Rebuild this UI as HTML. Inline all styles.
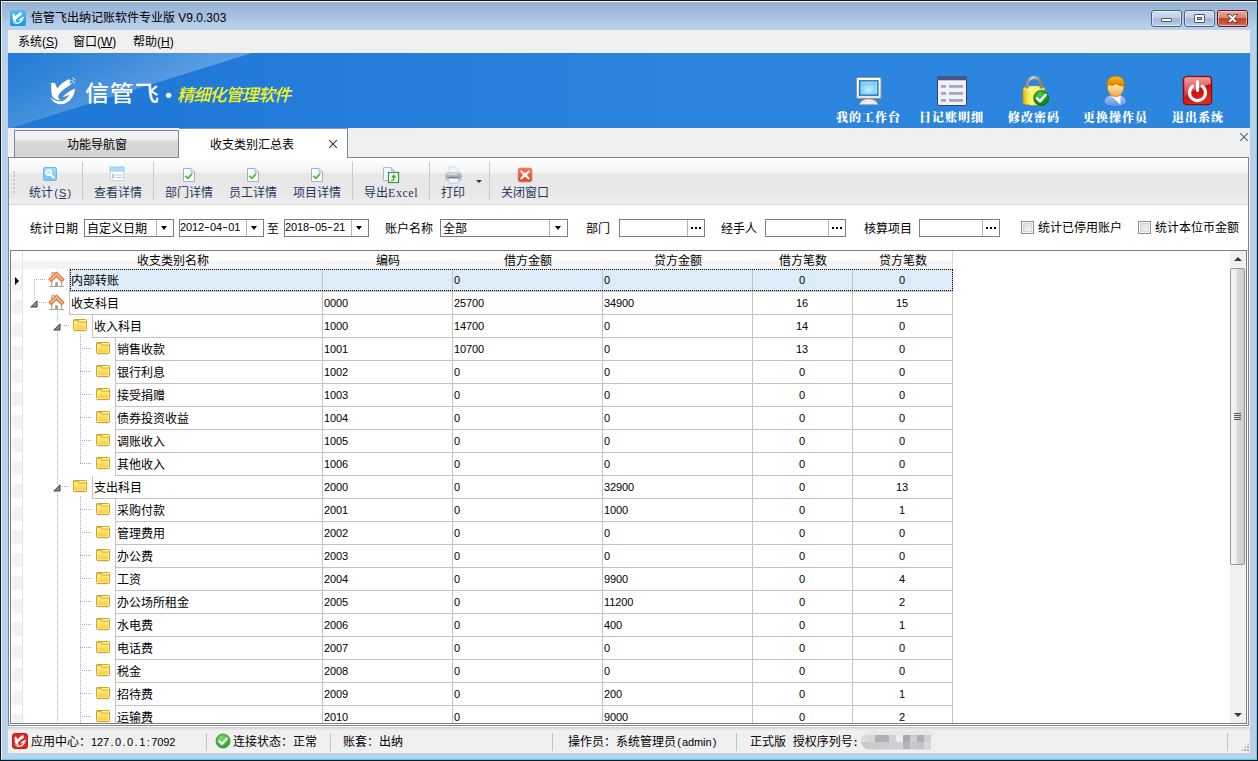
<!DOCTYPE html>
<html><head><meta charset="utf-8"><title>信管飞出纳记账软件专业版</title>
<style>
*{box-sizing:border-box}
html,body{margin:0;padding:0}
body{width:1258px;height:761px;overflow:hidden;position:relative;background:#b9d1ea;font-family:"Liberation Sans","Noto Sans CJK SC",sans-serif;font-size:12px;color:#000}
.a{position:absolute}
.t{position:absolute;white-space:nowrap;font-size:12px;line-height:12px;height:12px}
.n{position:absolute;white-space:nowrap;font-family:"Liberation Sans",sans-serif;font-size:11px;line-height:12px;height:12px;letter-spacing:-0.1px}
.m{font-family:"DejaVu Sans Mono","Liberation Mono",monospace;font-size:11px;letter-spacing:-0.62px}
.tb{color:#1e395b}
.s{font-family:"Liberation Sans",sans-serif;font-size:11px;letter-spacing:-0.1px}
.p{display:inline-block;width:6px;text-align:center;letter-spacing:0}
.h{transform:scaleX(1.6);position:relative;top:-1px}
.bl{position:absolute;white-space:nowrap;color:#fff;font-family:"Liberation Serif","Noto Serif CJK SC",serif;font-weight:900;font-size:12px;line-height:12px;height:12px;letter-spacing:1px}
.sep{position:absolute;width:1px;background:#c9c9c9}
.box{position:absolute;height:18px;top:219px;background:#fff;border:1px solid #7d7d7d}
.dv{position:absolute;top:0;bottom:0;width:1px;background:#b4b4b4}
.ar{position:absolute;width:0;height:0;border-left:3.5px solid transparent;border-right:3.5px solid transparent;border-top:4px solid #000}
.dots{position:absolute;font-weight:bold;font-size:10px;line-height:10px}
.hl{position:absolute;height:1px;background:#c3c3c3}
.vl{position:absolute;width:1px;background:#c3c3c3}
.dh{position:absolute;height:1px;background-image:linear-gradient(90deg,#b0b0b0 1px,transparent 1px);background-size:2px 1px}
.dvv{position:absolute;width:1px;background-image:linear-gradient(180deg,#b0b0b0 1px,transparent 1px);background-size:1px 2px}
.ind{position:absolute;left:1px;width:10px;height:14px;background:#f3f3f3}
</style></head>
<body>
<!-- window frame -->
<div class="a" style="left:0;top:0;width:1258px;height:761px;border:1px solid #10161e"></div>
<div class="a" style="left:1px;top:1px;width:1256px;height:759px;border:1px solid #e9f1fa;border-top-color:#fdfeff;border-right-color:#45d6f6;border-bottom-color:#45d6f6"></div>
<div class="a" style="left:2px;top:2px;width:1254px;height:28px;background:linear-gradient(180deg,#97b2d2 0%,#a3bddc 40%,#b5cde8 80%,#b9d1ea 100%)"></div>
<svg class="a" style="left:10px;top:10px" width="16" height="16" viewBox="0 0 16 16"><defs><linearGradient id="ti" x1="0" y1="0" x2="0" y2="1"><stop offset="0" stop-color="#4fc0f4"/><stop offset="1" stop-color="#169ae0"/></linearGradient></defs><rect x="0" y="0" width="16" height="16" rx="2.5" fill="url(#ti)"/><g fill="#fff" transform="translate(0.200,-1.200) scale(0.470)"><path d="M4.750 11.250C6.500 10.400 8.600 10.400 9.300 11.800L11.250 16.500C14 12.500 18.500 9 23.500 7L24.500 13C20 15.500 14.500 19.500 12.300 23.500C11.800 25 12.500 27 14.500 28C10.500 28.500 7 27 5.800 23C5 19 5.800 15 4.750 11.250Z"/><path d="M29 16.500C28.800 22 26 28 20 31C15 33.500 8 32.500 4.250 25.500C7 28 12 30 16.500 29C19.500 28.300 22 25.500 23 22.500C21 24 18.500 25 16.500 25C20 21.500 24 18.500 29 16.500Z"/></g></svg>
<div class="t" style="left:31px;top:11px;font-size:12px;line-height:14px;height:14px">信管飞出纳记账软件专业版 V9.0.303</div>
<div class="a" style="left:1151px;top:10px;width:31px;height:17px;border:1px solid #52627a;border-radius:3px;background:linear-gradient(180deg,#cfdff1 0%,#bdd1e8 45%,#a3bcd9 50%,#adc5e0 80%,#bcd2ea 100%);box-shadow:inset 0 0 0 1px rgba(255,255,255,.45)"><div class="a" style="left:9px;top:7px;width:11px;height:4px;background:#fff;border:1px solid #535666;border-radius:1px"></div></div>
<div class="a" style="left:1184px;top:10px;width:31px;height:17px;border:1px solid #52627a;border-radius:3px;background:linear-gradient(180deg,#cfdff1 0%,#bdd1e8 45%,#a3bcd9 50%,#adc5e0 80%,#bcd2ea 100%);box-shadow:inset 0 0 0 1px rgba(255,255,255,.45)"><div class="a" style="left:9px;top:3px;width:11px;height:9px;background:#fff;border:1px solid #535666;border-radius:1px"><div class="a" style="left:2px;top:2px;width:5px;height:3px;background:#9fb6d4;border:1px solid #535666"></div></div></div>
<div class="a" style="left:1217px;top:10px;width:31px;height:17px;border:1px solid #5a1a1f;border-radius:3px;background:linear-gradient(180deg,#e9a99c 0%,#d9826f 45%,#c4452a 50%,#c9553a 80%,#d97f66 100%);box-shadow:inset 0 0 0 1px rgba(255,255,255,.45)"><svg class="a" style="left:8px;top:2px" width="13" height="11" viewBox="0 0 13 11"><path d="M1 1.500h3.700l1.800 2.100 1.800-2.100h3.700l-3.700 4 3.700 4h-3.700l-1.800-2.100-1.800 2.100h-3.700l3.700-4z" fill="#fff" stroke="#4a3a44" stroke-width="0.900" stroke-linejoin="round"/></svg></div>
<!-- menu -->
<div class="a" style="left:8px;top:30px;width:1242px;height:723px;background:#f0f0f0"></div>
<div class="t" style="left:18px;top:35px;line-height:14px;height:14px">系统(<u>S</u>)</div>
<div class="t" style="left:73px;top:35px;line-height:14px;height:14px">窗口(<u>W</u>)</div>
<div class="t" style="left:133px;top:35px;line-height:14px;height:14px">帮助(<u>H</u>)</div>
<!-- banner -->
<div class="a" style="left:8px;top:53px;width:1242px;height:75px;background:linear-gradient(90deg,#1f79d6 0,#2079d6 12%,#257edb 30%,#2b84dd 55%,#2d86de 100%);overflow:hidden">
<svg class="a" style="left:0;top:0" width="1242" height="75" viewBox="0 0 1242 75"><defs><linearGradient id="sh" gradientUnits="userSpaceOnUse" x1="0" y1="0" x2="21.600" y2="69.300"><stop offset="0" stop-color="#fff" stop-opacity="0.010"/><stop offset="0.500" stop-color="#fff" stop-opacity="0.070"/><stop offset="1" stop-color="#fff" stop-opacity="0.170"/></linearGradient><linearGradient id="shx" gradientUnits="userSpaceOnUse" x1="0" y1="0" x2="244" y2="0"><stop offset="0" stop-color="#fff" stop-opacity="0"/><stop offset="1" stop-color="#fff" stop-opacity="0.140"/></linearGradient></defs><polygon points="0,0 244,0 0,76" fill="url(#sh)"/><polygon points="0,0 244,0 0,76" fill="url(#shx)"/></svg>
<svg class="a" style="left:38px;top:19px" width="36" height="38" viewBox="0 0 36 38"><g fill="#fff"><path d="M4.750 11.250C6.500 10.400 8.600 10.400 9.300 11.800L11.250 16.500C14 12.500 18.500 9 23.500 7L24.500 13C20 15.500 14.500 19.500 12.300 23.500C11.800 25 12.500 27 14.500 28C10.500 28.500 7 27 5.800 23C5 19 5.800 15 4.750 11.250Z"/><path d="M29 16.500C28.800 22 26 28 20 31C15 33.500 8 32.500 4.250 25.500C7 28 12 30 16.500 29C19.500 28.300 22 25.500 23 22.500C21 24 18.500 25 16.500 25C20 21.500 24 18.500 29 16.500Z"/><circle cx="27" cy="6.200" r="0.750"/><circle cx="28.500" cy="7.800" r="0.750"/><circle cx="26.500" cy="9.200" r="0.750"/><circle cx="28.200" cy="10.800" r="0.750"/><circle cx="24.800" cy="8.600" r="0.700"/><circle cx="25.200" cy="11.600" r="0.700"/></g></svg>
<div class="t" style="left:77px;top:29px;color:#fff;font-size:22px;line-height:24px;height:24px;font-weight:500;letter-spacing:0.6px;transform:scaleX(1.1);transform-origin:0 0">信管飞</div>
<div class="t" style="left:151px;top:32px;color:#fff;font-family:'Noto Sans CJK SC',sans-serif;font-size:19px;line-height:20px;height:20px;font-weight:900">·</div>
<div class="t" style="left:169px;top:33px;color:#f4f41a;font-size:17px;line-height:20px;height:20px;font-weight:500;font-style:italic;letter-spacing:-0.85px">精细化管理软件</div>
<svg class="a" style="left:846px;top:23px" width="30" height="30" viewBox="0 0 30 30"><defs><radialGradient id="scr" cx="0.500" cy="0.600" r="0.700"><stop offset="0" stop-color="#c8f2ff"/><stop offset="0.600" stop-color="#7fd0fa"/><stop offset="1" stop-color="#5bb9f2"/></radialGradient><linearGradient id="bz" x1="0" y1="0" x2="0" y2="1"><stop offset="0" stop-color="#ffffff"/><stop offset="1" stop-color="#e2e2e2"/></linearGradient></defs><rect x="2.500" y="1.500" width="24.500" height="21" rx="1.500" fill="url(#bz)" stroke="#9b978f" stroke-width="1"/><rect x="5.600" y="4.800" width="18.300" height="14.400" fill="url(#scr)" stroke="#1f71b8" stroke-width="1.300"/><path d="M7 6.200h15.500v11.600" fill="none" stroke="#d8f5ff" stroke-width="0.700" opacity="0.800"/><path d="M5.400 28.600c1-3.400 4.600-5.600 9.300-5.600s8.300 2.200 9.300 5.600z" fill="#ececec" stroke="#a8a49c" stroke-width="0.800"/></svg>
<svg class="a" style="left:928px;top:22px" width="32" height="32" viewBox="0 0 32 32"><rect x="1.500" y="1.500" width="29" height="29" rx="1.500" fill="#f1f1f9" stroke="#333f70" stroke-width="1"/><path d="M1 2.500q0-1.500 1.500-1.500h27q1.500 0 1.500 1.500V5.500H1z" fill="#46558a"/><path d="M2.300 6h27.400" stroke="#fff" stroke-width="0.800"/><g fill="#a6a6c4"><rect x="5" y="10" width="5" height="2.800"/><rect x="13" y="10" width="14" height="2.800"/><rect x="5" y="17" width="5" height="2.800"/><rect x="13" y="17" width="14" height="2.800"/><rect x="5" y="24" width="5" height="2.800"/><rect x="13" y="24" width="14" height="2.800"/></g></svg>
<svg class="a" style="left:1013px;top:22px" width="30" height="32" viewBox="0 0 30 32"><defs><linearGradient id="lk" x1="0" y1="0" x2="1" y2="0"><stop offset="0" stop-color="#dcae08"/><stop offset="0.180" stop-color="#f8e23a"/><stop offset="0.420" stop-color="#ffff7a"/><stop offset="0.700" stop-color="#f6dc22"/><stop offset="1" stop-color="#d9a800"/></linearGradient><linearGradient id="sk" x1="0" y1="0" x2="1" y2="0"><stop offset="0" stop-color="#8a8a8a"/><stop offset="0.350" stop-color="#d0d0d0"/><stop offset="1" stop-color="#7e7e7e"/></linearGradient><radialGradient id="gk" cx="0.420" cy="0.300" r="0.750"><stop offset="0" stop-color="#58c856"/><stop offset="0.550" stop-color="#159a1a"/><stop offset="1" stop-color="#067a0c"/></radialGradient></defs><path d="M6.200 16V9.400a7 7 0 0 1 14 0V16" fill="none" stroke="url(#sk)" stroke-width="3.200"/><path d="M2 13.500c0-1.400 5-2.500 11-2.500s11 1.100 11 2.500v14.300c0 1.400-5 2.500-11 2.500s-11-1.100-11-2.500z" fill="url(#lk)" stroke="#c49a06" stroke-width="0.700"/><ellipse cx="13" cy="13.600" rx="10.600" ry="2.300" fill="#fff59a" opacity="0.750"/><path d="M6.200 13.500v-2M20.200 13.500v-2" stroke="url(#sk)" stroke-width="3.200"/><circle cx="20.200" cy="23.100" r="7.600" fill="url(#gk)" stroke="#056a0a" stroke-width="0.600"/><path d="M15.800 23.200l3.200 3.200 5.600-6.600" fill="none" stroke="#fff" stroke-width="2.600" stroke-linecap="round" stroke-linejoin="round"/></svg>
<svg class="a" style="left:1094px;top:22px" width="26" height="32" viewBox="0 0 26 32"><defs><linearGradient id="hr" x1="0" y1="0" x2="0" y2="1"><stop offset="0" stop-color="#fbb828"/><stop offset="0.450" stop-color="#f09a0a"/><stop offset="1" stop-color="#d67c00"/></linearGradient><linearGradient id="fc" x1="0" y1="0" x2="0" y2="1"><stop offset="0" stop-color="#fff3cc"/><stop offset="0.500" stop-color="#ffdc96"/><stop offset="1" stop-color="#f6ae48"/></linearGradient><linearGradient id="bd" x1="0" y1="0" x2="0" y2="1"><stop offset="0" stop-color="#b4d2fa"/><stop offset="1" stop-color="#5a92e4"/></linearGradient></defs><path d="M2.200 27c0-4.400 4.400-7.600 11-7.600s11 3.200 11 7.600c0 2.600-4.800 4.300-11 4.300s-11-1.700-11-4.300z" fill="url(#bd)" stroke="#3c78d0" stroke-width="0.800"/><path d="M9 20.500l9.500 9.500v-10z" fill="#fff" opacity="0.950"/><ellipse cx="13.600" cy="11.800" rx="8.300" ry="9.700" fill="url(#fc)" stroke="#c47812" stroke-width="0.900"/><path d="M5.300 12.200C3.600 5 8 1 13.800 1c5.600 0 9.600 4 8.400 9.600-2.600.6-5.600-.2-8-2.200-1.800 2.400-5.400 2.200-7.400 1.200-.8.600-1.300 1.400-1.500 2.600z" fill="url(#hr)" stroke="#bf6c00" stroke-width="0.700"/></svg>
<svg class="a" style="left:1174px;top:22px" width="31" height="31" viewBox="0 0 31 31"><defs><linearGradient id="pw" x1="0" y1="0" x2="0.300" y2="1"><stop offset="0" stop-color="#d83030"/><stop offset="0.550" stop-color="#cc0a0a"/><stop offset="1" stop-color="#e02a1a"/></linearGradient><linearGradient id="pg" x1="0" y1="0" x2="0" y2="1"><stop offset="0" stop-color="#fff" stop-opacity="0.550"/><stop offset="1" stop-color="#fff" stop-opacity="0.150"/></linearGradient></defs><rect x="1.300" y="1.300" width="28.400" height="28.400" rx="3.500" fill="url(#pw)" stroke="#7c0606" stroke-width="1"/><path d="M2.300 4.500q0-2.200 2.200-2.200h22q2.200 0 2.200 2.200V9C20 11.500 9 16 2.300 22z" fill="url(#pg)"/><path d="M10.700 11.200a8 8 0 1 0 9.600 0" fill="none" stroke="#fff" stroke-width="3.200" stroke-linecap="round"/><path d="M15.500 6.800v8.600" stroke="#fff" stroke-width="3.200" stroke-linecap="round"/></svg>
<div class="bl" style="left:828px;top:59px">我的工作台</div>
<div class="bl" style="left:911px;top:59px">日记账明细</div>
<div class="bl" style="left:1000px;top:59px">修改密码</div>
<div class="bl" style="left:1075px;top:59px">更换操作员</div>
<div class="bl" style="left:1164px;top:59px">退出系统</div>
</div>
<!-- tabs -->
<div class="a" style="left:8px;top:157px;width:1241px;height:569px;background:#fff;border:1px solid #7f8697"></div>
<div class="a" style="left:14px;top:130px;width:166px;height:28px;border:1px solid #7f8697;border-bottom:none;background:linear-gradient(180deg,#f3f3f3 0,#efefef 9px,#d8d8d8 10px,#d4d4d4 100%)"></div>
<div class="a" style="left:14px;top:157px;width:165px;height:1px;background:#7f8697"></div>
<div class="t" style="left:67px;top:139px">功能导航窗</div>
<div class="a" style="left:179px;top:128px;width:169px;height:30px;background:#fff;border-right:1px solid #7f8697;border-top:1px solid #8a93a8"></div>
<div class="a" style="left:178px;top:130px;width:1px;height:27px;background:#7f8697"></div>
<div class="t" style="left:210px;top:139px">收支类别汇总表</div>
<svg class="a" style="left:328px;top:139px" width="10" height="10" viewBox="0 0 10 10"><path d="M1.200 1.200l7.600 7.600M8.800 1.200l-7.600 7.600" stroke="#333" stroke-width="1.100"/></svg>
<svg class="a" style="left:1239px;top:132px" width="10" height="10" viewBox="0 0 10 10"><path d="M1.200 1.200l7.600 7.600M8.800 1.200l-7.600 7.600" stroke="#5a6272" stroke-width="1.100"/></svg>
<!-- toolbar -->
<div class="a" style="left:9px;top:158px;width:1239px;height:47px;background:linear-gradient(180deg,#ffffff 0,#fbfbfb 6px,#f3f3f3 15px,#e8e8e8 15px,#e8e8e8 38px,#eeeeee 44px,#f1f1f1 46px,#d8d8d8 46px,#d8d8d8 47px)"></div>
<div class="a" style="left:13px;top:171px;width:2px;height:23px;background-image:linear-gradient(180deg,#c9c9c9 2px,transparent 2px);background-size:2px 4px"></div>
<div class="sep" style="left:82px;top:162px;height:38px"></div>
<div class="sep" style="left:153px;top:162px;height:38px"></div>
<div class="sep" style="left:352px;top:162px;height:38px"></div>
<div class="sep" style="left:429px;top:162px;height:38px"></div>
<div class="sep" style="left:489px;top:162px;height:38px"></div>
<div class="t tb" style="left:29px;top:187px">统计<span style="margin-left:0px"><span class="s"><span class="p">(</span><u>S</u><span class="p">)</span></span></span></div>
<div class="t tb" style="left:94px;top:187px">查看详情</div>
<div class="t tb" style="left:165px;top:187px">部门详情</div>
<div class="t tb" style="left:229px;top:187px">员工详情</div>
<div class="t tb" style="left:293px;top:187px">项目详情</div>
<div class="t tb" style="left:364px;top:187px">导出<span class="s" style="letter-spacing:0.55px;font-family:'Liberation Serif',serif;font-size:12px">Excel</span></div>
<div class="t tb" style="left:441px;top:187px">打印</div>
<div class="t tb" style="left:501px;top:187px">关闭窗口</div>
<svg class="a" style="left:42px;top:166px" width="16" height="16" viewBox="0 0 16 16"><defs><linearGradient id="s1" x1="0" y1="0" x2="0" y2="1"><stop offset="0" stop-color="#a4dcfb"/><stop offset="1" stop-color="#74bff0"/></linearGradient></defs><rect x="1.500" y="1.500" width="13" height="13" rx="1.500" fill="url(#s1)" stroke="#6db6ea" stroke-width="1"/><circle cx="6.800" cy="6.600" r="2.600" fill="#bfe6fc" stroke="#fff" stroke-width="1.500"/><path d="M8.800 8.800l3 3" stroke="#fff" stroke-width="2" stroke-linecap="round"/></svg>
<svg class="a" style="left:109px;top:166px" width="16" height="16" viewBox="0 0 16 16"><rect x="1.500" y="1.500" width="13" height="13" fill="#fff" stroke="#d0d4da" stroke-width="1"/><rect x="1" y="1" width="14" height="4" fill="#a9def9" stroke="#86c8f2" stroke-width="0.800"/><rect x="3" y="8" width="2.500" height="4.500" fill="#9fd0f4"/><path d="M7 9h6M7 11.500h6" stroke="#c4c4c4" stroke-width="1"/></svg>
<svg class="a" style="left:182px;top:167px" width="14" height="16" viewBox="0 0 14 16"><path d="M1.500 1.500h7.500l3.500 3.500v9.500h-11z" fill="#fdfdff" stroke="#a3aed2" stroke-width="1"/><path d="M9 1.500v3.500h3.500" fill="#e4ebfa" stroke="#a3aed2" stroke-width="0.900"/><path d="M3.8 9.3l2 2 3.9-4.2" fill="none" stroke="#55bb3e" stroke-width="1.9" stroke-linecap="round" stroke-linejoin="round"/></svg>
<svg class="a" style="left:246px;top:167px" width="14" height="16" viewBox="0 0 14 16"><path d="M1.500 1.500h7.500l3.500 3.500v9.500h-11z" fill="#fdfdff" stroke="#a3aed2" stroke-width="1"/><path d="M9 1.500v3.500h3.500" fill="#e4ebfa" stroke="#a3aed2" stroke-width="0.900"/><path d="M3.8 9.3l2 2 3.9-4.2" fill="none" stroke="#55bb3e" stroke-width="1.9" stroke-linecap="round" stroke-linejoin="round"/></svg>
<svg class="a" style="left:310px;top:167px" width="14" height="16" viewBox="0 0 14 16"><path d="M1.500 1.500h7.500l3.500 3.500v9.500h-11z" fill="#fdfdff" stroke="#a3aed2" stroke-width="1"/><path d="M9 1.500v3.500h3.500" fill="#e4ebfa" stroke="#a3aed2" stroke-width="0.900"/><path d="M3.8 9.3l2 2 3.9-4.2" fill="none" stroke="#55bb3e" stroke-width="1.9" stroke-linecap="round" stroke-linejoin="round"/></svg>
<svg class="a" style="left:382px;top:166px" width="18" height="18" viewBox="0 0 18 18"><path d="M1.500 1.500h7.500l3 3v10h-10.500z" fill="#f4f7ff" stroke="#b0b4dc" stroke-width="1"/><path d="M9 1.500v3h3" fill="#cfe0fa" stroke="#b0b4dc" stroke-width="0.800"/><rect x="6.500" y="6.500" width="10" height="10" fill="#fff" stroke="#3c9a3a" stroke-width="1.300"/><path d="M11.500 8.200l3 3.300h-2v1.500c0 1-1 2-2.500 2h-1v-1.200h1c.6 0 1-.4 1-1v-1.300h-2z" fill="#3fa53a"/></svg>
<svg class="a" style="left:445px;top:166px" width="17" height="18" viewBox="0 0 17 18"><defs><linearGradient id="pr" x1="0" y1="0" x2="0" y2="1"><stop offset="0" stop-color="#e6e6e6"/><stop offset="0.550" stop-color="#a9a9a9"/><stop offset="1" stop-color="#d4d4d4"/></linearGradient></defs><path d="M4 1h6.500l2.500 2.500v4h-9z" fill="#eef6ff" stroke="#bcd8f5" stroke-width="0.800"/><rect x="0.600" y="6.500" width="15.800" height="8" rx="2.500" fill="url(#pr)" stroke="#b8b8b8" stroke-width="0.700"/><rect x="3.500" y="11" width="10" height="1.600" fill="#777"/><rect x="3.800" y="12.600" width="9.400" height="4.400" fill="#f2f8ff" stroke="#a8cef2" stroke-width="0.800"/><circle cx="13.800" cy="8.600" r="0.600" fill="#444"/></svg>
<div class="ar" style="left:476px;top:180px;border-left-width:3px;border-right-width:3px;border-top:3px solid #1e395b"></div>
<svg class="a" style="left:517px;top:167px" width="16" height="16" viewBox="0 0 16 16"><defs><linearGradient id="cx" x1="0" y1="0" x2="0" y2="1"><stop offset="0" stop-color="#f3775c"/><stop offset="1" stop-color="#dd4528"/></linearGradient></defs><rect x="1.200" y="1.200" width="13.600" height="13.600" rx="2" fill="url(#cx)" stroke="#e2664c" stroke-width="0.800"/><path d="M4.200 3.200l3.800 3 3.800-3 1.200 1.200-3 3.600 3 3.600-1.200 1.200-3.800-3-3.800 3-1.200-1.200 3-3.600-3-3.600z" fill="#f6f8fb"/></svg>
<!-- filter -->
<div class="t" style="left:30px;top:223px">统计日期</div>
<div class="t" style="left:267px;top:223px">至</div>
<div class="t" style="left:385px;top:223px">账户名称</div>
<div class="t" style="left:586px;top:223px">部门</div>
<div class="t" style="left:721px;top:223px">经手人</div>
<div class="t" style="left:864px;top:223px">核算项目</div>
<div class="box" style="left:84px;width:90px"><div class="t" style="left:2px;top:3px">自定义日期</div><div class="dv" style="left:71px"></div><div class="ar" style="left:76px;top:6px"></div></div>
<div class="box" style="left:179px;width:85px"><div class="t" style="left:0px;top:1px"><span class="s">2012<span class="p h">-</span>04<span class="p h">-</span>01</span></div><div class="dv" style="left:66px"></div><div class="ar" style="left:71px;top:6px"></div></div>
<div class="box" style="left:284px;width:85px"><div class="t" style="left:0px;top:1px"><span class="s">2018<span class="p h">-</span>05<span class="p h">-</span>21</span></div><div class="dv" style="left:66px"></div><div class="ar" style="left:71px;top:6px"></div></div>
<div class="box" style="left:440px;width:128px"><div class="t" style="left:2px;top:3px">全部</div><div class="dv" style="left:108px"></div><div class="ar" style="left:114px;top:6px"></div></div>
<div class="box" style="left:619px;width:86px"><div class="dv" style="left:67px"></div><div class="a" style="left:71px;top:7px;width:2px;height:2px;background:#000;box-shadow:4px 0 0 #000,8px 0 0 #000"></div></div>
<div class="box" style="left:765px;width:81px"><div class="dv" style="left:62px"></div><div class="a" style="left:66px;top:7px;width:2px;height:2px;background:#000;box-shadow:4px 0 0 #000,8px 0 0 #000"></div></div>
<div class="box" style="left:919px;width:81px"><div class="dv" style="left:62px"></div><div class="a" style="left:66px;top:7px;width:2px;height:2px;background:#000;box-shadow:4px 0 0 #000,8px 0 0 #000"></div></div>
<div class="a" style="left:1021px;top:221px;width:13px;height:13px;border:1px solid #8e8f8f;background:#f4f4f4"><div class="a" style="left:1px;top:1px;width:9px;height:9px;border:1px solid #d6d6d6;background:linear-gradient(135deg,#dcdcdc,#f6f6f6)"></div></div>
<div class="t" style="left:1038px;top:222px">统计已停用账户</div>
<div class="a" style="left:1138px;top:221px;width:13px;height:13px;border:1px solid #8e8f8f;background:#f4f4f4"><div class="a" style="left:1px;top:1px;width:9px;height:9px;border:1px solid #d6d6d6;background:linear-gradient(135deg,#dcdcdc,#f6f6f6)"></div></div>
<div class="t" style="left:1155px;top:222px">统计本位币金额</div>
<!-- grid -->
<div class="a" style="left:10px;top:250px;width:1237px;height:474px;border:1px solid #7d7d7d;background:#fff;overflow:hidden">
<div class="a" style="left:0;top:0;width:942px;height:18px;background:linear-gradient(180deg,#fff 0,#fff 9px,#f5f5f6 10px,#f3f3f4 100%)"></div>
<div class="a" style="left:11px;top:10px;width:1px;height:8px;background:#fdfdfd"></div>
<div class="a" style="left:311px;top:10px;width:1px;height:8px;background:#fdfdfd"></div>
<div class="a" style="left:441px;top:10px;width:1px;height:8px;background:#fdfdfd"></div>
<div class="a" style="left:591px;top:10px;width:1px;height:8px;background:#fdfdfd"></div>
<div class="a" style="left:741px;top:10px;width:1px;height:8px;background:#fdfdfd"></div>
<div class="a" style="left:841px;top:10px;width:1px;height:8px;background:#fdfdfd"></div>
<div class="a" style="left:941px;top:10px;width:1px;height:8px;background:#fdfdfd"></div>
<div class="a" style="left:941px;top:0;width:1px;height:18px;background:#dadada"></div>
<div class="t" style="left:126px;top:4px">收支类别名称</div>
<div class="t" style="left:365px;top:4px">编码</div>
<div class="t" style="left:493px;top:4px">借方金额</div>
<div class="t" style="left:643px;top:4px">贷方金额</div>
<div class="t" style="left:768px;top:4px">借方笔数</div>
<div class="t" style="left:868px;top:4px">贷方笔数</div>
<svg width="0" height="0" style="position:absolute"><defs><linearGradient id="fg" x1="0" y1="0" x2="0" y2="1"><stop offset="0" stop-color="#fdf3a4"/><stop offset="0.500" stop-color="#fbe066"/><stop offset="1" stop-color="#f3c838"/></linearGradient></defs></svg>
<div class="ind" style="top:26px"></div>
<div class="a" style="left:59px;top:18px;width:882px;height:22px;background:#dcecf8"></div>
<div class="hl" style="left:58px;top:40px;width:884px"></div>
<div class="vl" style="left:58px;top:18px;height:23px"></div>
<svg class="a" style="left:37px;top:20px" width="17" height="17" viewBox="0 0 17 17"><path d="M3.800 6V1.600h2.600V4" fill="#fff" stroke="#8f949a" stroke-width="0.900"/><path d="M3.800 8.500v7h9.600v-7" fill="#fff" stroke="#9a9a9a" stroke-width="1"/><rect x="7.200" y="11.200" width="2.700" height="4.300" fill="#9c9c9c"/><path d="M1 15.500h15" stroke="#a8a8a8" stroke-width="1"/><path d="M8.500 1.200L16 8.300l-2.200 2.300-5.300-5.100-5.300 5.100L1 8.300z" fill="#f6b087" stroke="#e0722c" stroke-width="1.100" stroke-linejoin="round"/><path d="M8.500 2.800l5.800 5.600M8.500 2.800L2.700 8.400" stroke="#fbd3ba" stroke-width="0.900" stroke-dasharray="0.900 0.900" fill="none"/></svg>
<div class="dh" style="left:23px;top:28px;width:12px"></div>
<div class="t" style="left:60px;top:24px">内部转账</div>
<div class="n" style="left:443px;top:23px">0</div>
<div class="n" style="left:593px;top:23px">0</div>
<div class="n" style="left:741px;top:23px;width:100px;text-align:center">0</div>
<div class="n" style="left:841px;top:23px;width:100px;text-align:center">0</div>
<div class="ind" style="top:49px"></div>
<div class="hl" style="left:58px;top:63px;width:884px"></div>
<div class="vl" style="left:58px;top:41px;height:23px"></div>
<svg class="a" style="left:37px;top:43px" width="17" height="17" viewBox="0 0 17 17"><path d="M3.800 6V1.600h2.600V4" fill="#fff" stroke="#8f949a" stroke-width="0.900"/><path d="M3.800 8.500v7h9.600v-7" fill="#fff" stroke="#9a9a9a" stroke-width="1"/><rect x="7.200" y="11.200" width="2.700" height="4.300" fill="#9c9c9c"/><path d="M1 15.500h15" stroke="#a8a8a8" stroke-width="1"/><path d="M8.500 1.200L16 8.300l-2.200 2.300-5.300-5.100-5.300 5.100L1 8.300z" fill="#f6b087" stroke="#e0722c" stroke-width="1.100" stroke-linejoin="round"/><path d="M8.500 2.800l5.800 5.600M8.500 2.800L2.700 8.400" stroke="#fbd3ba" stroke-width="0.900" stroke-dasharray="0.900 0.900" fill="none"/></svg>
<svg class="a" style="left:19px;top:49px" width="8" height="8" viewBox="0 0 8 8"><path d="M7 0.800v6.200h-6.200z" fill="#8a8a8a" stroke="#3c3c3c" stroke-width="1" stroke-linejoin="round"/></svg>
<div class="dh" style="left:28px;top:51px;width:7px"></div>
<div class="t" style="left:60px;top:47px">收支科目</div>
<div class="n" style="left:313px;top:46px">0000</div>
<div class="n" style="left:443px;top:46px">25700</div>
<div class="n" style="left:593px;top:46px">34900</div>
<div class="n" style="left:741px;top:46px;width:100px;text-align:center">16</div>
<div class="n" style="left:841px;top:46px;width:100px;text-align:center">15</div>
<div class="ind" style="top:72px"></div>
<div class="hl" style="left:81px;top:86px;width:861px"></div>
<div class="vl" style="left:81px;top:64px;height:23px"></div>
<svg class="a" style="left:62px;top:68px" width="14" height="13" viewBox="0 0 14 13"><rect x="0.500" y="0.500" width="13" height="11" rx="1" fill="url(#fg)" stroke="#d6a31a" stroke-width="1"/><rect x="0.500" y="0.500" width="4.800" height="1.300" fill="#d6a31a"/><rect x="5.800" y="1.100" width="7" height="1.500" fill="#fef8a8"/><path d="M4.800 1l.9 2.100H13" fill="none" stroke="#d6a31a" stroke-width="0.900"/><path d="M1.500 2.600v7.900h11V3.800" fill="none" stroke="#fff7c0" stroke-width="0.700" opacity="0.850"/><path d="M1 12.300h12" stroke="#c9cfe0" stroke-width="0.600" opacity="0.700"/></svg>
<svg class="a" style="left:42px;top:72px" width="8" height="8" viewBox="0 0 8 8"><path d="M7 0.800v6.200h-6.200z" fill="#8a8a8a" stroke="#3c3c3c" stroke-width="1" stroke-linejoin="round"/></svg>
<div class="dh" style="left:51px;top:74px;width:7px"></div>
<div class="t" style="left:83px;top:70px">收入科目</div>
<div class="n" style="left:313px;top:69px">1000</div>
<div class="n" style="left:443px;top:69px">14700</div>
<div class="n" style="left:593px;top:69px">0</div>
<div class="n" style="left:741px;top:69px;width:100px;text-align:center">14</div>
<div class="n" style="left:841px;top:69px;width:100px;text-align:center">0</div>
<div class="ind" style="top:95px"></div>
<div class="hl" style="left:104px;top:109px;width:838px"></div>
<div class="vl" style="left:104px;top:87px;height:23px"></div>
<svg class="a" style="left:85px;top:91px" width="14" height="13" viewBox="0 0 14 13"><rect x="0.500" y="0.500" width="13" height="11" rx="1" fill="url(#fg)" stroke="#d6a31a" stroke-width="1"/><rect x="0.500" y="0.500" width="4.800" height="1.300" fill="#d6a31a"/><rect x="5.800" y="1.100" width="7" height="1.500" fill="#fef8a8"/><path d="M4.800 1l.9 2.100H13" fill="none" stroke="#d6a31a" stroke-width="0.900"/><path d="M1.500 2.600v7.900h11V3.800" fill="none" stroke="#fff7c0" stroke-width="0.700" opacity="0.850"/><path d="M1 12.300h12" stroke="#c9cfe0" stroke-width="0.600" opacity="0.700"/></svg>
<div class="dh" style="left:69px;top:97px;width:12px"></div>
<div class="t" style="left:106px;top:93px">销售收款</div>
<div class="n" style="left:313px;top:92px">1001</div>
<div class="n" style="left:443px;top:92px">10700</div>
<div class="n" style="left:593px;top:92px">0</div>
<div class="n" style="left:741px;top:92px;width:100px;text-align:center">13</div>
<div class="n" style="left:841px;top:92px;width:100px;text-align:center">0</div>
<div class="ind" style="top:118px"></div>
<div class="hl" style="left:104px;top:132px;width:838px"></div>
<div class="vl" style="left:104px;top:110px;height:23px"></div>
<svg class="a" style="left:85px;top:114px" width="14" height="13" viewBox="0 0 14 13"><rect x="0.500" y="0.500" width="13" height="11" rx="1" fill="url(#fg)" stroke="#d6a31a" stroke-width="1"/><rect x="0.500" y="0.500" width="4.800" height="1.300" fill="#d6a31a"/><rect x="5.800" y="1.100" width="7" height="1.500" fill="#fef8a8"/><path d="M4.800 1l.9 2.100H13" fill="none" stroke="#d6a31a" stroke-width="0.900"/><path d="M1.500 2.600v7.900h11V3.800" fill="none" stroke="#fff7c0" stroke-width="0.700" opacity="0.850"/><path d="M1 12.300h12" stroke="#c9cfe0" stroke-width="0.600" opacity="0.700"/></svg>
<div class="dh" style="left:69px;top:120px;width:12px"></div>
<div class="t" style="left:106px;top:116px">银行利息</div>
<div class="n" style="left:313px;top:115px">1002</div>
<div class="n" style="left:443px;top:115px">0</div>
<div class="n" style="left:593px;top:115px">0</div>
<div class="n" style="left:741px;top:115px;width:100px;text-align:center">0</div>
<div class="n" style="left:841px;top:115px;width:100px;text-align:center">0</div>
<div class="ind" style="top:141px"></div>
<div class="hl" style="left:104px;top:155px;width:838px"></div>
<div class="vl" style="left:104px;top:133px;height:23px"></div>
<svg class="a" style="left:85px;top:137px" width="14" height="13" viewBox="0 0 14 13"><rect x="0.500" y="0.500" width="13" height="11" rx="1" fill="url(#fg)" stroke="#d6a31a" stroke-width="1"/><rect x="0.500" y="0.500" width="4.800" height="1.300" fill="#d6a31a"/><rect x="5.800" y="1.100" width="7" height="1.500" fill="#fef8a8"/><path d="M4.800 1l.9 2.100H13" fill="none" stroke="#d6a31a" stroke-width="0.900"/><path d="M1.500 2.600v7.900h11V3.800" fill="none" stroke="#fff7c0" stroke-width="0.700" opacity="0.850"/><path d="M1 12.300h12" stroke="#c9cfe0" stroke-width="0.600" opacity="0.700"/></svg>
<div class="dh" style="left:69px;top:143px;width:12px"></div>
<div class="t" style="left:106px;top:139px">接受捐赠</div>
<div class="n" style="left:313px;top:138px">1003</div>
<div class="n" style="left:443px;top:138px">0</div>
<div class="n" style="left:593px;top:138px">0</div>
<div class="n" style="left:741px;top:138px;width:100px;text-align:center">0</div>
<div class="n" style="left:841px;top:138px;width:100px;text-align:center">0</div>
<div class="ind" style="top:164px"></div>
<div class="hl" style="left:104px;top:178px;width:838px"></div>
<div class="vl" style="left:104px;top:156px;height:23px"></div>
<svg class="a" style="left:85px;top:160px" width="14" height="13" viewBox="0 0 14 13"><rect x="0.500" y="0.500" width="13" height="11" rx="1" fill="url(#fg)" stroke="#d6a31a" stroke-width="1"/><rect x="0.500" y="0.500" width="4.800" height="1.300" fill="#d6a31a"/><rect x="5.800" y="1.100" width="7" height="1.500" fill="#fef8a8"/><path d="M4.800 1l.9 2.100H13" fill="none" stroke="#d6a31a" stroke-width="0.900"/><path d="M1.500 2.600v7.900h11V3.800" fill="none" stroke="#fff7c0" stroke-width="0.700" opacity="0.850"/><path d="M1 12.300h12" stroke="#c9cfe0" stroke-width="0.600" opacity="0.700"/></svg>
<div class="dh" style="left:69px;top:166px;width:12px"></div>
<div class="t" style="left:106px;top:162px">债券投资收益</div>
<div class="n" style="left:313px;top:161px">1004</div>
<div class="n" style="left:443px;top:161px">0</div>
<div class="n" style="left:593px;top:161px">0</div>
<div class="n" style="left:741px;top:161px;width:100px;text-align:center">0</div>
<div class="n" style="left:841px;top:161px;width:100px;text-align:center">0</div>
<div class="ind" style="top:187px"></div>
<div class="hl" style="left:104px;top:201px;width:838px"></div>
<div class="vl" style="left:104px;top:179px;height:23px"></div>
<svg class="a" style="left:85px;top:183px" width="14" height="13" viewBox="0 0 14 13"><rect x="0.500" y="0.500" width="13" height="11" rx="1" fill="url(#fg)" stroke="#d6a31a" stroke-width="1"/><rect x="0.500" y="0.500" width="4.800" height="1.300" fill="#d6a31a"/><rect x="5.800" y="1.100" width="7" height="1.500" fill="#fef8a8"/><path d="M4.800 1l.9 2.100H13" fill="none" stroke="#d6a31a" stroke-width="0.900"/><path d="M1.500 2.600v7.900h11V3.800" fill="none" stroke="#fff7c0" stroke-width="0.700" opacity="0.850"/><path d="M1 12.300h12" stroke="#c9cfe0" stroke-width="0.600" opacity="0.700"/></svg>
<div class="dh" style="left:69px;top:189px;width:12px"></div>
<div class="t" style="left:106px;top:185px">调账收入</div>
<div class="n" style="left:313px;top:184px">1005</div>
<div class="n" style="left:443px;top:184px">0</div>
<div class="n" style="left:593px;top:184px">0</div>
<div class="n" style="left:741px;top:184px;width:100px;text-align:center">0</div>
<div class="n" style="left:841px;top:184px;width:100px;text-align:center">0</div>
<div class="ind" style="top:210px"></div>
<div class="hl" style="left:104px;top:224px;width:838px"></div>
<div class="vl" style="left:104px;top:202px;height:23px"></div>
<svg class="a" style="left:85px;top:206px" width="14" height="13" viewBox="0 0 14 13"><rect x="0.500" y="0.500" width="13" height="11" rx="1" fill="url(#fg)" stroke="#d6a31a" stroke-width="1"/><rect x="0.500" y="0.500" width="4.800" height="1.300" fill="#d6a31a"/><rect x="5.800" y="1.100" width="7" height="1.500" fill="#fef8a8"/><path d="M4.800 1l.9 2.100H13" fill="none" stroke="#d6a31a" stroke-width="0.900"/><path d="M1.500 2.600v7.900h11V3.800" fill="none" stroke="#fff7c0" stroke-width="0.700" opacity="0.850"/><path d="M1 12.300h12" stroke="#c9cfe0" stroke-width="0.600" opacity="0.700"/></svg>
<div class="dh" style="left:69px;top:212px;width:12px"></div>
<div class="t" style="left:106px;top:208px">其他收入</div>
<div class="n" style="left:313px;top:207px">1006</div>
<div class="n" style="left:443px;top:207px">0</div>
<div class="n" style="left:593px;top:207px">0</div>
<div class="n" style="left:741px;top:207px;width:100px;text-align:center">0</div>
<div class="n" style="left:841px;top:207px;width:100px;text-align:center">0</div>
<div class="ind" style="top:233px"></div>
<div class="hl" style="left:81px;top:247px;width:861px"></div>
<div class="vl" style="left:81px;top:225px;height:23px"></div>
<svg class="a" style="left:62px;top:229px" width="14" height="13" viewBox="0 0 14 13"><rect x="0.500" y="0.500" width="13" height="11" rx="1" fill="url(#fg)" stroke="#d6a31a" stroke-width="1"/><rect x="0.500" y="0.500" width="4.800" height="1.300" fill="#d6a31a"/><rect x="5.800" y="1.100" width="7" height="1.500" fill="#fef8a8"/><path d="M4.800 1l.9 2.100H13" fill="none" stroke="#d6a31a" stroke-width="0.900"/><path d="M1.500 2.600v7.900h11V3.800" fill="none" stroke="#fff7c0" stroke-width="0.700" opacity="0.850"/><path d="M1 12.300h12" stroke="#c9cfe0" stroke-width="0.600" opacity="0.700"/></svg>
<svg class="a" style="left:42px;top:233px" width="8" height="8" viewBox="0 0 8 8"><path d="M7 0.800v6.200h-6.200z" fill="#8a8a8a" stroke="#3c3c3c" stroke-width="1" stroke-linejoin="round"/></svg>
<div class="dh" style="left:51px;top:235px;width:7px"></div>
<div class="t" style="left:83px;top:231px">支出科目</div>
<div class="n" style="left:313px;top:230px">2000</div>
<div class="n" style="left:443px;top:230px">0</div>
<div class="n" style="left:593px;top:230px">32900</div>
<div class="n" style="left:741px;top:230px;width:100px;text-align:center">0</div>
<div class="n" style="left:841px;top:230px;width:100px;text-align:center">13</div>
<div class="ind" style="top:256px"></div>
<div class="hl" style="left:104px;top:270px;width:838px"></div>
<div class="vl" style="left:104px;top:248px;height:23px"></div>
<svg class="a" style="left:85px;top:252px" width="14" height="13" viewBox="0 0 14 13"><rect x="0.500" y="0.500" width="13" height="11" rx="1" fill="url(#fg)" stroke="#d6a31a" stroke-width="1"/><rect x="0.500" y="0.500" width="4.800" height="1.300" fill="#d6a31a"/><rect x="5.800" y="1.100" width="7" height="1.500" fill="#fef8a8"/><path d="M4.800 1l.9 2.100H13" fill="none" stroke="#d6a31a" stroke-width="0.900"/><path d="M1.500 2.600v7.900h11V3.800" fill="none" stroke="#fff7c0" stroke-width="0.700" opacity="0.850"/><path d="M1 12.300h12" stroke="#c9cfe0" stroke-width="0.600" opacity="0.700"/></svg>
<div class="dh" style="left:69px;top:258px;width:12px"></div>
<div class="t" style="left:106px;top:254px">采购付款</div>
<div class="n" style="left:313px;top:253px">2001</div>
<div class="n" style="left:443px;top:253px">0</div>
<div class="n" style="left:593px;top:253px">1000</div>
<div class="n" style="left:741px;top:253px;width:100px;text-align:center">0</div>
<div class="n" style="left:841px;top:253px;width:100px;text-align:center">1</div>
<div class="ind" style="top:279px"></div>
<div class="hl" style="left:104px;top:293px;width:838px"></div>
<div class="vl" style="left:104px;top:271px;height:23px"></div>
<svg class="a" style="left:85px;top:275px" width="14" height="13" viewBox="0 0 14 13"><rect x="0.500" y="0.500" width="13" height="11" rx="1" fill="url(#fg)" stroke="#d6a31a" stroke-width="1"/><rect x="0.500" y="0.500" width="4.800" height="1.300" fill="#d6a31a"/><rect x="5.800" y="1.100" width="7" height="1.500" fill="#fef8a8"/><path d="M4.800 1l.9 2.100H13" fill="none" stroke="#d6a31a" stroke-width="0.900"/><path d="M1.500 2.600v7.900h11V3.800" fill="none" stroke="#fff7c0" stroke-width="0.700" opacity="0.850"/><path d="M1 12.300h12" stroke="#c9cfe0" stroke-width="0.600" opacity="0.700"/></svg>
<div class="dh" style="left:69px;top:281px;width:12px"></div>
<div class="t" style="left:106px;top:277px">管理费用</div>
<div class="n" style="left:313px;top:276px">2002</div>
<div class="n" style="left:443px;top:276px">0</div>
<div class="n" style="left:593px;top:276px">0</div>
<div class="n" style="left:741px;top:276px;width:100px;text-align:center">0</div>
<div class="n" style="left:841px;top:276px;width:100px;text-align:center">0</div>
<div class="ind" style="top:302px"></div>
<div class="hl" style="left:104px;top:316px;width:838px"></div>
<div class="vl" style="left:104px;top:294px;height:23px"></div>
<svg class="a" style="left:85px;top:298px" width="14" height="13" viewBox="0 0 14 13"><rect x="0.500" y="0.500" width="13" height="11" rx="1" fill="url(#fg)" stroke="#d6a31a" stroke-width="1"/><rect x="0.500" y="0.500" width="4.800" height="1.300" fill="#d6a31a"/><rect x="5.800" y="1.100" width="7" height="1.500" fill="#fef8a8"/><path d="M4.800 1l.9 2.100H13" fill="none" stroke="#d6a31a" stroke-width="0.900"/><path d="M1.500 2.600v7.900h11V3.800" fill="none" stroke="#fff7c0" stroke-width="0.700" opacity="0.850"/><path d="M1 12.300h12" stroke="#c9cfe0" stroke-width="0.600" opacity="0.700"/></svg>
<div class="dh" style="left:69px;top:304px;width:12px"></div>
<div class="t" style="left:106px;top:300px">办公费</div>
<div class="n" style="left:313px;top:299px">2003</div>
<div class="n" style="left:443px;top:299px">0</div>
<div class="n" style="left:593px;top:299px">0</div>
<div class="n" style="left:741px;top:299px;width:100px;text-align:center">0</div>
<div class="n" style="left:841px;top:299px;width:100px;text-align:center">0</div>
<div class="ind" style="top:325px"></div>
<div class="hl" style="left:104px;top:339px;width:838px"></div>
<div class="vl" style="left:104px;top:317px;height:23px"></div>
<svg class="a" style="left:85px;top:321px" width="14" height="13" viewBox="0 0 14 13"><rect x="0.500" y="0.500" width="13" height="11" rx="1" fill="url(#fg)" stroke="#d6a31a" stroke-width="1"/><rect x="0.500" y="0.500" width="4.800" height="1.300" fill="#d6a31a"/><rect x="5.800" y="1.100" width="7" height="1.500" fill="#fef8a8"/><path d="M4.800 1l.9 2.100H13" fill="none" stroke="#d6a31a" stroke-width="0.900"/><path d="M1.500 2.600v7.900h11V3.800" fill="none" stroke="#fff7c0" stroke-width="0.700" opacity="0.850"/><path d="M1 12.300h12" stroke="#c9cfe0" stroke-width="0.600" opacity="0.700"/></svg>
<div class="dh" style="left:69px;top:327px;width:12px"></div>
<div class="t" style="left:106px;top:323px">工资</div>
<div class="n" style="left:313px;top:322px">2004</div>
<div class="n" style="left:443px;top:322px">0</div>
<div class="n" style="left:593px;top:322px">9900</div>
<div class="n" style="left:741px;top:322px;width:100px;text-align:center">0</div>
<div class="n" style="left:841px;top:322px;width:100px;text-align:center">4</div>
<div class="ind" style="top:348px"></div>
<div class="hl" style="left:104px;top:362px;width:838px"></div>
<div class="vl" style="left:104px;top:340px;height:23px"></div>
<svg class="a" style="left:85px;top:344px" width="14" height="13" viewBox="0 0 14 13"><rect x="0.500" y="0.500" width="13" height="11" rx="1" fill="url(#fg)" stroke="#d6a31a" stroke-width="1"/><rect x="0.500" y="0.500" width="4.800" height="1.300" fill="#d6a31a"/><rect x="5.800" y="1.100" width="7" height="1.500" fill="#fef8a8"/><path d="M4.800 1l.9 2.100H13" fill="none" stroke="#d6a31a" stroke-width="0.900"/><path d="M1.500 2.600v7.900h11V3.800" fill="none" stroke="#fff7c0" stroke-width="0.700" opacity="0.850"/><path d="M1 12.300h12" stroke="#c9cfe0" stroke-width="0.600" opacity="0.700"/></svg>
<div class="dh" style="left:69px;top:350px;width:12px"></div>
<div class="t" style="left:106px;top:346px">办公场所租金</div>
<div class="n" style="left:313px;top:345px">2005</div>
<div class="n" style="left:443px;top:345px">0</div>
<div class="n" style="left:593px;top:345px">11200</div>
<div class="n" style="left:741px;top:345px;width:100px;text-align:center">0</div>
<div class="n" style="left:841px;top:345px;width:100px;text-align:center">2</div>
<div class="ind" style="top:371px"></div>
<div class="hl" style="left:104px;top:385px;width:838px"></div>
<div class="vl" style="left:104px;top:363px;height:23px"></div>
<svg class="a" style="left:85px;top:367px" width="14" height="13" viewBox="0 0 14 13"><rect x="0.500" y="0.500" width="13" height="11" rx="1" fill="url(#fg)" stroke="#d6a31a" stroke-width="1"/><rect x="0.500" y="0.500" width="4.800" height="1.300" fill="#d6a31a"/><rect x="5.800" y="1.100" width="7" height="1.500" fill="#fef8a8"/><path d="M4.800 1l.9 2.100H13" fill="none" stroke="#d6a31a" stroke-width="0.900"/><path d="M1.500 2.600v7.900h11V3.800" fill="none" stroke="#fff7c0" stroke-width="0.700" opacity="0.850"/><path d="M1 12.300h12" stroke="#c9cfe0" stroke-width="0.600" opacity="0.700"/></svg>
<div class="dh" style="left:69px;top:373px;width:12px"></div>
<div class="t" style="left:106px;top:369px">水电费</div>
<div class="n" style="left:313px;top:368px">2006</div>
<div class="n" style="left:443px;top:368px">0</div>
<div class="n" style="left:593px;top:368px">400</div>
<div class="n" style="left:741px;top:368px;width:100px;text-align:center">0</div>
<div class="n" style="left:841px;top:368px;width:100px;text-align:center">1</div>
<div class="ind" style="top:394px"></div>
<div class="hl" style="left:104px;top:408px;width:838px"></div>
<div class="vl" style="left:104px;top:386px;height:23px"></div>
<svg class="a" style="left:85px;top:390px" width="14" height="13" viewBox="0 0 14 13"><rect x="0.500" y="0.500" width="13" height="11" rx="1" fill="url(#fg)" stroke="#d6a31a" stroke-width="1"/><rect x="0.500" y="0.500" width="4.800" height="1.300" fill="#d6a31a"/><rect x="5.800" y="1.100" width="7" height="1.500" fill="#fef8a8"/><path d="M4.800 1l.9 2.100H13" fill="none" stroke="#d6a31a" stroke-width="0.900"/><path d="M1.500 2.600v7.900h11V3.800" fill="none" stroke="#fff7c0" stroke-width="0.700" opacity="0.850"/><path d="M1 12.300h12" stroke="#c9cfe0" stroke-width="0.600" opacity="0.700"/></svg>
<div class="dh" style="left:69px;top:396px;width:12px"></div>
<div class="t" style="left:106px;top:392px">电话费</div>
<div class="n" style="left:313px;top:391px">2007</div>
<div class="n" style="left:443px;top:391px">0</div>
<div class="n" style="left:593px;top:391px">0</div>
<div class="n" style="left:741px;top:391px;width:100px;text-align:center">0</div>
<div class="n" style="left:841px;top:391px;width:100px;text-align:center">0</div>
<div class="ind" style="top:417px"></div>
<div class="hl" style="left:104px;top:431px;width:838px"></div>
<div class="vl" style="left:104px;top:409px;height:23px"></div>
<svg class="a" style="left:85px;top:413px" width="14" height="13" viewBox="0 0 14 13"><rect x="0.500" y="0.500" width="13" height="11" rx="1" fill="url(#fg)" stroke="#d6a31a" stroke-width="1"/><rect x="0.500" y="0.500" width="4.800" height="1.300" fill="#d6a31a"/><rect x="5.800" y="1.100" width="7" height="1.500" fill="#fef8a8"/><path d="M4.800 1l.9 2.100H13" fill="none" stroke="#d6a31a" stroke-width="0.900"/><path d="M1.500 2.600v7.900h11V3.800" fill="none" stroke="#fff7c0" stroke-width="0.700" opacity="0.850"/><path d="M1 12.300h12" stroke="#c9cfe0" stroke-width="0.600" opacity="0.700"/></svg>
<div class="dh" style="left:69px;top:419px;width:12px"></div>
<div class="t" style="left:106px;top:415px">税金</div>
<div class="n" style="left:313px;top:414px">2008</div>
<div class="n" style="left:443px;top:414px">0</div>
<div class="n" style="left:593px;top:414px">0</div>
<div class="n" style="left:741px;top:414px;width:100px;text-align:center">0</div>
<div class="n" style="left:841px;top:414px;width:100px;text-align:center">0</div>
<div class="ind" style="top:440px"></div>
<div class="hl" style="left:104px;top:454px;width:838px"></div>
<div class="vl" style="left:104px;top:432px;height:23px"></div>
<svg class="a" style="left:85px;top:436px" width="14" height="13" viewBox="0 0 14 13"><rect x="0.500" y="0.500" width="13" height="11" rx="1" fill="url(#fg)" stroke="#d6a31a" stroke-width="1"/><rect x="0.500" y="0.500" width="4.800" height="1.300" fill="#d6a31a"/><rect x="5.800" y="1.100" width="7" height="1.500" fill="#fef8a8"/><path d="M4.800 1l.9 2.100H13" fill="none" stroke="#d6a31a" stroke-width="0.900"/><path d="M1.500 2.600v7.900h11V3.800" fill="none" stroke="#fff7c0" stroke-width="0.700" opacity="0.850"/><path d="M1 12.300h12" stroke="#c9cfe0" stroke-width="0.600" opacity="0.700"/></svg>
<div class="dh" style="left:69px;top:442px;width:12px"></div>
<div class="t" style="left:106px;top:438px">招待费</div>
<div class="n" style="left:313px;top:437px">2009</div>
<div class="n" style="left:443px;top:437px">0</div>
<div class="n" style="left:593px;top:437px">200</div>
<div class="n" style="left:741px;top:437px;width:100px;text-align:center">0</div>
<div class="n" style="left:841px;top:437px;width:100px;text-align:center">1</div>
<div class="ind" style="top:463px"></div>
<div class="hl" style="left:104px;top:477px;width:838px"></div>
<div class="vl" style="left:104px;top:455px;height:23px"></div>
<svg class="a" style="left:85px;top:459px" width="14" height="13" viewBox="0 0 14 13"><rect x="0.500" y="0.500" width="13" height="11" rx="1" fill="url(#fg)" stroke="#d6a31a" stroke-width="1"/><rect x="0.500" y="0.500" width="4.800" height="1.300" fill="#d6a31a"/><rect x="5.800" y="1.100" width="7" height="1.500" fill="#fef8a8"/><path d="M4.800 1l.9 2.100H13" fill="none" stroke="#d6a31a" stroke-width="0.900"/><path d="M1.500 2.600v7.900h11V3.800" fill="none" stroke="#fff7c0" stroke-width="0.700" opacity="0.850"/><path d="M1 12.300h12" stroke="#c9cfe0" stroke-width="0.600" opacity="0.700"/></svg>
<div class="dh" style="left:69px;top:465px;width:12px"></div>
<div class="t" style="left:106px;top:461px">运输费</div>
<div class="n" style="left:313px;top:460px">2010</div>
<div class="n" style="left:443px;top:460px">0</div>
<div class="n" style="left:593px;top:460px">9000</div>
<div class="n" style="left:741px;top:460px;width:100px;text-align:center">0</div>
<div class="n" style="left:841px;top:460px;width:100px;text-align:center">2</div>
<div class="vl" style="left:311px;top:18px;height:460px"></div>
<div class="vl" style="left:441px;top:18px;height:460px"></div>
<div class="vl" style="left:591px;top:18px;height:460px"></div>
<div class="vl" style="left:741px;top:18px;height:460px"></div>
<div class="vl" style="left:841px;top:18px;height:460px"></div>
<div class="vl" style="left:941px;top:18px;height:460px"></div>
<div class="a" style="left:11px;top:0px;width:1px;height:472px;background:#e4e4e4"></div>
<div class="dvv" style="left:23px;top:28px;height:21px"></div>
<div class="dvv" style="left:46px;top:60px;height:12px"></div>
<div class="dvv" style="left:46px;top:80px;height:153px"></div>
<div class="dvv" style="left:46px;top:242px;height:237px"></div>
<div class="dvv" style="left:69px;top:83px;height:130px"></div>
<div class="dvv" style="left:69px;top:245px;height:234px"></div>
<div class="a" style="left:59px;top:18px;width:883px;height:22px;border:1px dotted #000"></div>
<div class="a" style="left:4px;top:26px;width:0;height:0;border-top:4px solid transparent;border-bottom:4px solid transparent;border-left:4px solid #000"></div>
<div class="a" style="left:1219px;top:0;width:17px;height:472px;background:#f0f0f0"></div>
<div class="a" style="left:1223px;top:6px;width:0;height:0;border-left:4px solid transparent;border-right:4px solid transparent;border-bottom:4px solid #3a3a3a"></div>
<div class="a" style="left:1223px;top:462px;width:0;height:0;border-left:4px solid transparent;border-right:4px solid transparent;border-top:4px solid #3a3a3a"></div>
<div class="a" style="left:1219px;top:17px;width:15px;height:297px;border:1px solid #979797;border-radius:2px;background:linear-gradient(90deg,#f4f4f4 0,#eeeeee 40%,#d6d6d8 50%,#cfcfd2 100%)"></div>
<div class="a" style="left:1223px;top:162px;width:7px;height:7px;background-image:linear-gradient(180deg,#555 1px,transparent 1px);background-size:7px 2px"></div>
</div>
<!-- status -->
<div class="a" style="left:8px;top:726px;width:1242px;height:1px;background:#fff"></div>
<div class="a" style="left:8px;top:727px;width:1242px;height:4px;background:linear-gradient(180deg,#cbcbcb 0,#dedede 35%,#ebebeb 70%,#f0f0f0 100%)"></div>
<div class="a" style="left:206px;top:733px;width:1px;height:18px;background:#c4c4c4"></div>
<div class="a" style="left:330px;top:733px;width:1px;height:18px;background:#c4c4c4"></div>
<div class="a" style="left:552px;top:733px;width:1px;height:18px;background:#c4c4c4"></div>
<div class="a" style="left:736px;top:733px;width:1px;height:18px;background:#c4c4c4"></div>
<div class="a" style="left:1227px;top:733px;width:1px;height:18px;background:#c4c4c4"></div>
<svg class="a" style="left:12px;top:733px" width="16" height="16" viewBox="0 0 16 16"><rect x="0.500" y="0.500" width="15" height="15" rx="2.500" fill="#db2a22" stroke="#c21c16" stroke-width="1"/><g fill="#fff" transform="translate(0.2,-1.2) scale(0.47)"><path d="M4.750 11.250C6.500 10.400 8.600 10.400 9.300 11.800L11.250 16.500C14 12.500 18.500 9 23.500 7L24.500 13C20 15.500 14.500 19.500 12.300 23.500C11.800 25 12.500 27 14.500 28C10.500 28.500 7 27 5.800 23C5 19 5.800 15 4.750 11.250Z"/><path d="M29 16.500C28.800 22 26 28 20 31C15 33.500 8 32.500 4.250 25.500C7 28 12 30 16.500 29C19.500 28.300 22 25.500 23 22.500C21 24 18.500 25 16.500 25C20 21.500 24 18.500 29 16.500Z"/></g></svg>
<div class="t" style="left:31px;top:736px">应用中心：<span class="s">127<span class="p">.</span>0<span class="p">.</span>0<span class="p">.</span>1<span class="p">:</span>7092</span></div>
<svg class="a" style="left:215px;top:733px" width="16" height="16" viewBox="0 0 16 16"><defs><radialGradient id="ok" cx="0.400" cy="0.300" r="0.800"><stop offset="0" stop-color="#7fdc6a"/><stop offset="1" stop-color="#1f9a22"/></radialGradient></defs><circle cx="8" cy="8" r="7" fill="url(#ok)" stroke="#2a8a2a" stroke-width="0.800"/><path d="M4.300 8.200l2.700 2.700 4.800-5.400" fill="none" stroke="#fff" stroke-width="2.200" stroke-linecap="round" stroke-linejoin="round"/></svg>
<div class="t" style="left:233px;top:736px">连接状态：正常</div>
<div class="t" style="left:343px;top:736px">账套：出纳</div>
<div class="t" style="left:568px;top:736px">操作员：系统管理员<span class="s"><span class="p">(</span>admin<span class="p">)</span></span></div>
<div class="t" style="left:750px;top:736px;word-spacing:3.500px">正式版 授权序列号<span class="s" style="margin-left:1px;font-weight:bold">:</span></div>
<div class="a" style="left:861px;top:731px;width:73px;height:19px;overflow:hidden;border-radius:9px 3px 3px 9px/9px 3px 3px 9px">
<div class="a" style="left:3px;top:0;width:70px;height:4px;background:#e7e7e7"></div>
<div class="a" style="left:0px;top:4px;width:7px;height:7px;background:#dcdcdc"></div>
<div class="a" style="left:0px;top:11px;width:7px;height:7px;background:#c8c8c8"></div>
<div class="a" style="left:7px;top:4px;width:7px;height:7px;background:#d6d6d6"></div>
<div class="a" style="left:7px;top:11px;width:7px;height:7px;background:#cccccc"></div>
<div class="a" style="left:14px;top:4px;width:7px;height:7px;background:#b0b0b0"></div>
<div class="a" style="left:14px;top:11px;width:7px;height:7px;background:#cacaca"></div>
<div class="a" style="left:21px;top:4px;width:7px;height:7px;background:#b2b2b2"></div>
<div class="a" style="left:21px;top:11px;width:7px;height:7px;background:#cdcdcd"></div>
<div class="a" style="left:28px;top:4px;width:7px;height:7px;background:#d2d2d2"></div>
<div class="a" style="left:28px;top:11px;width:7px;height:7px;background:#d0d0d0"></div>
<div class="a" style="left:35px;top:4px;width:7px;height:7px;background:#ececec"></div>
<div class="a" style="left:35px;top:11px;width:7px;height:7px;background:#d0d0d0"></div>
<div class="a" style="left:42px;top:4px;width:7px;height:7px;background:#a8a8a8"></div>
<div class="a" style="left:42px;top:11px;width:7px;height:7px;background:#b4b4b4"></div>
<div class="a" style="left:49px;top:4px;width:7px;height:7px;background:#cecece"></div>
<div class="a" style="left:49px;top:11px;width:7px;height:7px;background:#c8c8c8"></div>
<div class="a" style="left:56px;top:4px;width:7px;height:7px;background:#b0b0b0"></div>
<div class="a" style="left:56px;top:11px;width:7px;height:7px;background:#c4c4c4"></div>
<div class="a" style="left:63px;top:4px;width:7px;height:7px;background:#d0d0d0"></div>
<div class="a" style="left:63px;top:11px;width:7px;height:7px;background:#d8d8d8"></div>
<div class="a" style="left:4px;top:18px;width:66px;height:1px;background:#d3deea"></div>
</div>
<div class="a" style="left:1241px;top:743px;width:8px;height:8px;background-image:radial-gradient(circle at 1px 1px,#b0b0b0 1px,transparent 1.200px);background-size:3px 3px;clip-path:polygon(100% 0,100% 100%,0 100%)"></div>
</body></html>
